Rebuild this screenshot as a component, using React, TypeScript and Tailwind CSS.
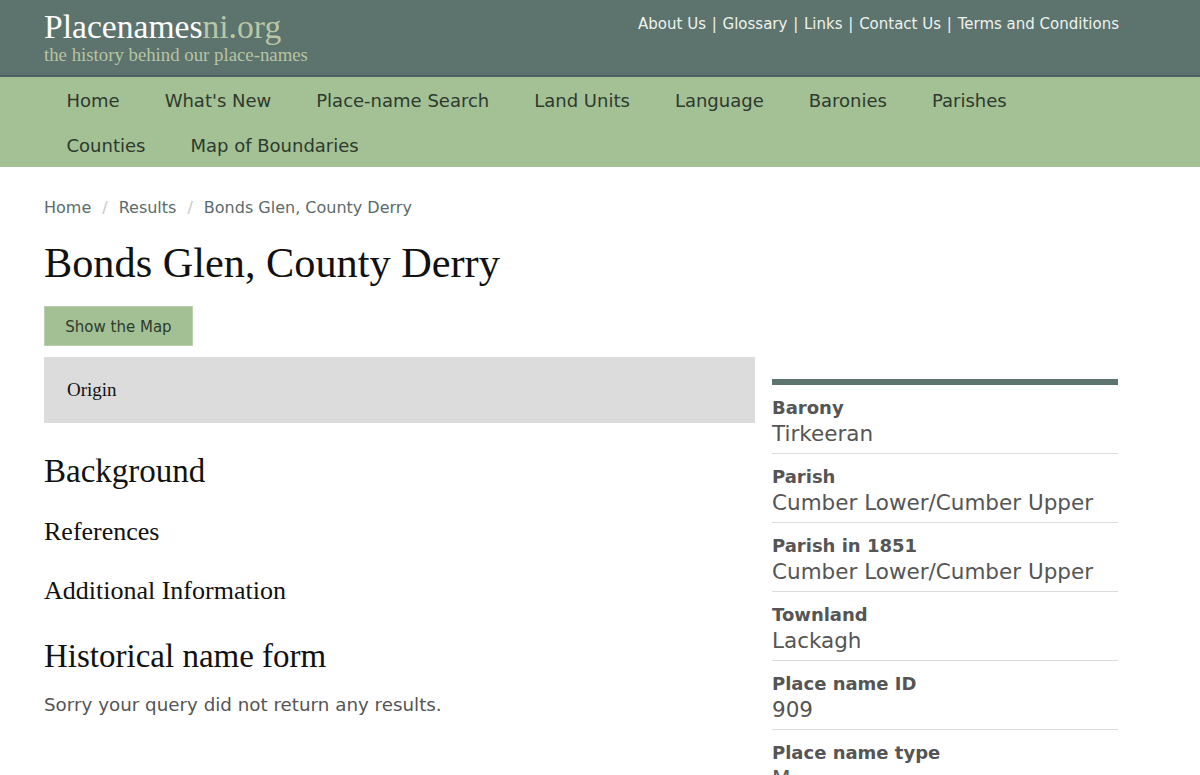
import React from "react";

const sans = { fontFamily: "Verdana, 'DejaVu Sans', sans-serif" };
const serif = { fontFamily: "'Liberation Serif', 'Times New Roman', serif" };

const navRow1 = ["Home", "What's New", "Place-name Search", "Land Units", "Language", "Baronies", "Parishes"];
const navRow2 = ["Counties", "Map of Boundaries"];

const facts = [
  ["Barony", "Tirkeeran"],
  ["Parish", "Cumber Lower/Cumber Upper"],
  ["Parish in 1851", "Cumber Lower/Cumber Upper"],
  ["Townland", "Lackagh"],
  ["Place name ID", "909"],
  ["Place name type", "M"],
];

export default function App() {
  return (
    <div className="w-[1200px] h-[775px] overflow-hidden bg-white" style={sans}>
      <header className="bg-[#5d736d] h-[77px] border-b-2 border-[#4d5f63]">
        <div className="mx-[44px] flex justify-between">
          <div className="pt-[8px]">
            <div className="text-[33.6px] leading-[38px] text-white" style={serif}>
              Placenames<span className="text-[#b7c7a5]">ni.org</span>
            </div>
            <div className="text-[18.8px] leading-[20px] text-[#b7c4a3] mt-[-1px]" style={serif}>
              the history behind our place-names
            </div>
          </div>
          <div className="pt-[13px] text-[15px] text-[#eef2ee] mr-[37px]">
            About Us <span className="mx-[1px]">|</span> Glossary <span className="mx-[1px]">|</span> Links <span className="mx-[1px]">|</span> Contact Us <span className="mx-[1px]">|</span> Terms and Conditions
          </div>
        </div>
      </header>
      <nav className="bg-[#a4c095] h-[90px] pt-[1px]">
        <div className="mx-[44px] text-[18px] text-[#2d3a2d]">
          <div className="flex h-[45px] items-center">
            {navRow1.map((n) => (
              <span key={n} className="px-[22.5px]">{n}</span>
            ))}
          </div>
          <div className="flex h-[44px] items-center">
            {navRow2.map((n) => (
              <span key={n} className="px-[22.5px]">{n}</span>
            ))}
          </div>
        </div>
      </nav>
      <main className="mx-[44px] w-[1075px]">
        <div className="pt-[30px] text-[16px] leading-[22px] text-[#5b6b6b] flex">
          <span>Home</span>
          <span className="px-[11px] text-[#c9c9c9]">/</span>
          <span>Results</span>
          <span className="px-[11px] text-[#c9c9c9]">/</span>
          <span>Bonds Glen, County Derry</span>
        </div>
        <h1 className="text-[42.3px] leading-[48px] mt-[20px] text-[#111]" style={serif}>
          Bonds Glen, County Derry
        </h1>
        <button className="mt-[19px] h-[40px] w-[149px] bg-[#a3bf94] text-[15px] leading-[20px] pt-[1px] text-[#2d3a2d] border border-[#b8cfad]">
          Show the Map
        </button>
        <div className="flex gap-[17px] mt-[11px]">
          <div className="w-[711px]">
            <div className="bg-[#dcdcdc] h-[66px] flex items-center pl-[23px] text-[19px] text-[#111]" style={serif}>
              Origin
            </div>
            <h2 className="text-[33px] leading-[38px] mt-[29px] text-[#111]" style={serif}>Background</h2>
            <h3 className="text-[26px] leading-[30px] mt-[27px] text-[#111]" style={serif}>References</h3>
            <h3 className="text-[26px] leading-[30px] mt-[29px] text-[#111]" style={serif}>Additional Information</h3>
            <h2 className="text-[33px] leading-[38px] mt-[31px] text-[#111]" style={serif}>Historical name form</h2>
            <p className="text-[18.3px] leading-[24px] mt-[18px] text-[#555]">Sorry your query did not return any results.</p>
          </div>
          <div className="w-[346px] pt-[22px]">
            <div className="h-[6px] bg-[#5d736d]" />
            {facts.map(([k, v]) => (
              <div key={k} className="border-b border-[#dcdcdc] h-[69px] pt-[10px] text-[#555]">
                <div className="text-[18px] leading-[26px] font-bold">{k}</div>
                <div className="text-[21.5px] leading-[26px]">{v}</div>
              </div>
            ))}
          </div>
        </div>
      </main>
    </div>
  );
}
